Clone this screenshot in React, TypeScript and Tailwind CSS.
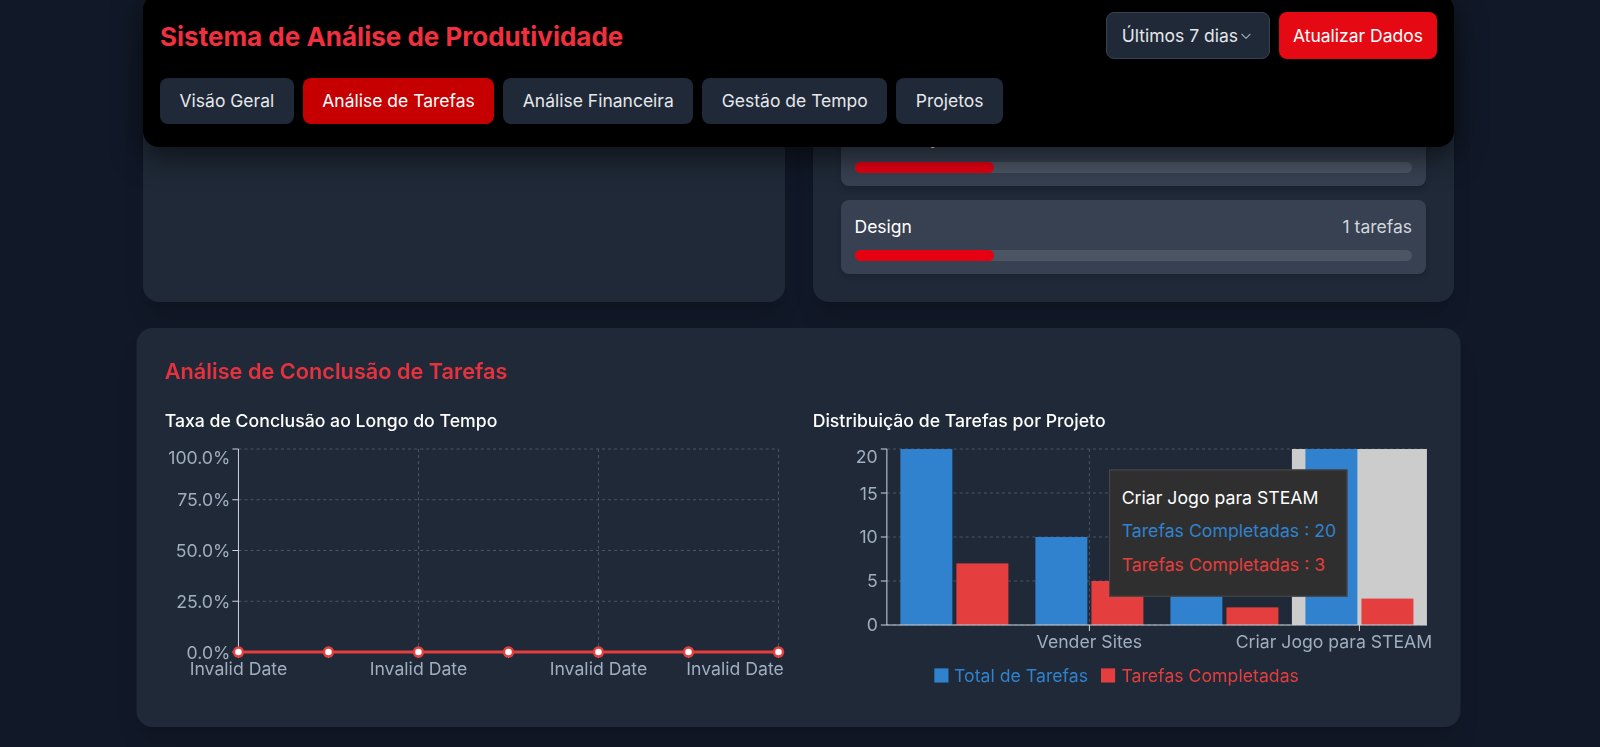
import React from "react";

const BLUE = "#3182ce";
const RED = "#e53e3e";
const GRID = "#4a5568";
const AXIS = "#cbd5e0";
const LABEL = "#a0aec0";
const FS = 17.5;

function CompletionLineChart() {
  const W = 613.5;
  const H = 255;
  const x0 = 73;
  const x1 = 607.7;
  const y0 = 7.8;
  const y1 = 208.8;
  const pts = Array.from({ length: 7 }, (_, i) => x0 + ((x1 - x0) * i) / 6);
  const yt = [0, 25, 50, 75, 100];
  const yOf = (v: number) => y1 - ((y1 - y0) * v) / 100;
  const labelIdx = [0, 2, 4];
  return (
    <svg width={W} height={H} viewBox={`0 0 ${W} ${H}`} className="block" style={{ fontFamily: "Inter, sans-serif" }}>
      {yt.map((v) => (
        <line key={`h${v}`} x1={x0} x2={x1} y1={yOf(v)} y2={yOf(v)} stroke={GRID} strokeDasharray="3 3" />
      ))}
      {[0, 2, 4, 6].map((i) => (
        <line key={`v${i}`} x1={pts[i]} x2={pts[i]} y1={y0} y2={y1} stroke={GRID} strokeDasharray="3 3" />
      ))}
      <line x1={x0} x2={x0} y1={y0} y2={y1} stroke={AXIS} />
      {yt.map((v) => (
        <line key={`t${v}`} x1={x0 - 6} x2={x0} y1={yOf(v)} y2={yOf(v)} stroke={AXIS} />
      ))}
      {yt.map((v) => (
        <text
          key={`l${v}`}
          x={x0 - 8}
          y={v === 100 ? yOf(v) + 8 : yOf(v)}
          textAnchor="end"
          dominantBaseline="central"
          fill={LABEL}
          fontSize={FS}
        >
          {v.toFixed(1)}%
        </text>
      ))}
      <line x1={x0} x2={x1} y1={y1} y2={y1} stroke={AXIS} />
      {pts.map((p, i) => (
        <line key={`xt${i}`} x1={p} x2={p} y1={y1} y2={y1 + 6} stroke={AXIS} />
      ))}
      {labelIdx.map((i) => (
        <text key={`xl${i}`} x={pts[i]} y={225} textAnchor="middle" dominantBaseline="central" fill={LABEL} fontSize={FS}>
          Invalid Date
        </text>
      ))}
      <text x={613} y={225} textAnchor="end" dominantBaseline="central" fill={LABEL} fontSize={FS}>
        Invalid Date
      </text>
      <line x1={x0} x2={x1} y1={y1} y2={y1} stroke={RED} strokeWidth={3} />
      {pts.map((p, i) => (
        <circle key={`d${i}`} cx={p} cy={y1} r={4.5} fill="#ffffff" stroke={RED} strokeWidth={2.5} />
      ))}
    </svg>
  );
}

const projects = [
  { name: "Desenvolver App", total: 20, done: 7 },
  { name: "Vender Sites", total: 10, done: 5 },
  { name: "Marketing Digital", total: 8, done: 2 },
  { name: "Criar Jogo para STEAM", total: 20, done: 3 },
];

function ProjectBarChart() {
  const W = 613.5;
  const H = 212;
  const x0 = 73;
  const x1 = 607.7;
  const y0 = 7.8;
  const y1 = 182;
  const cw = (x1 - x0) / 4;
  const yOf = (v: number) => y1 - ((y1 - y0) * v) / 20;
  const yt = [0, 5, 10, 15, 20];
  const pad = cw * 0.1;
  const bw = (cw - 2 * pad - 4) / 2;
  return (
    <svg width={W} height={H} viewBox={`0 0 ${W} ${H}`} className="block" style={{ fontFamily: "Inter, sans-serif" }}>
      {yt.map((v) => (
        <line key={`h${v}`} x1={x0} x2={x1} y1={yOf(v)} y2={yOf(v)} stroke={GRID} strokeDasharray="3 3" />
      ))}
      {[1, 3].map((i) => (
        <line
          key={`v${i}`}
          x1={x0 + cw * (i + 0.5)}
          x2={x0 + cw * (i + 0.5)}
          y1={y0}
          y2={y1}
          stroke={GRID}
          strokeDasharray="3 3"
        />
      ))}
      <rect x={x0 + cw * 3} y={y0} width={cw} height={y1 - y0} fill="#cccccc" />
      {projects.map((p, i) => {
        const sx = x0 + cw * i + pad;
        return (
          <g key={p.name}>
            <rect x={sx} y={yOf(p.total)} width={bw} height={y1 - yOf(p.total)} fill={BLUE} />
            <rect x={sx + bw + 4} y={yOf(p.done)} width={bw} height={y1 - yOf(p.done)} fill={RED} />
          </g>
        );
      })}
      <line x1={x0} x2={x0} y1={y0} y2={y1} stroke={AXIS} />
      {yt.map((v) => (
        <line key={`t${v}`} x1={x0 - 6} x2={x0} y1={yOf(v)} y2={yOf(v)} stroke={AXIS} />
      ))}
      {yt.map((v) => (
        <text
          key={`l${v}`}
          x={x0 - 9}
          y={v === 20 ? yOf(v) + 7 : yOf(v)}
          textAnchor="end"
          dominantBaseline="central"
          fill={LABEL}
          fontSize={FS}
        >
          {v}
        </text>
      ))}
      <line x1={x0} x2={x1} y1={y1} y2={y1} stroke={AXIS} />
      {[1, 3].map((i) => (
        <line key={`xt${i}`} x1={x0 + cw * (i + 0.5)} x2={x0 + cw * (i + 0.5)} y1={y1} y2={y1 + 6} stroke={AXIS} />
      ))}
      <text x={x0 + cw * 1.5} y={198.5} textAnchor="middle" dominantBaseline="central" fill={LABEL} fontSize={FS}>
        Vender Sites
      </text>
      <text x={613} y={198.5} textAnchor="end" dominantBaseline="central" fill={LABEL} fontSize={FS}>
        Criar Jogo para STEAM
      </text>
    </svg>
  );
}

function Chevron() {
  return (
    <svg width="14" height="14" viewBox="0 0 24 24" fill="none" stroke="#9ca3af" strokeWidth="2" strokeLinecap="round" strokeLinejoin="round" className="ml-[1px]">
      <polyline points="5 9 12 16 19 9" />
    </svg>
  );
}

const tabs = ["Visão Geral", "Análise de Tarefas", "Análise Financeira", "Gestão de Tempo", "Projetos"];

const categories = [
  { name: "Desenvolvimento", count: 2, pct: 50 },
  { name: "Marketing", count: 1, pct: 25 },
  { name: "Manutenção", count: 1, pct: 25 },
  { name: "Design", count: 1, pct: 25 },
];

export default function App() {
  return (
    <div className="min-h-[747px] overflow-hidden bg-[#111827] font-['Inter',sans-serif] text-[17.5px] leading-6 text-white">
      <div className="relative ml-[143px] w-[1311px] pt-8 pb-6">
        {/* Header (sticky, page scrolled) */}
        <header className="absolute left-0 right-0 top-[-6px] z-20 rounded-2xl bg-black px-[17px] pt-[18px] pb-[23px] shadow-[0_10px_30px_rgba(0,0,0,0.55)]">
          <div className="flex h-[47px] items-center justify-between">
            <h1 className="pt-[2px] text-[26px] leading-8 font-bold text-[#f0303f]">Sistema de Análise de Produtividade</h1>
            <div className="flex items-center gap-[9px]">
              <button className="flex h-[47px] items-center rounded-lg border border-[#374151] bg-[#1f2937] pl-[15px] pr-4 text-[17.5px] leading-6 text-gray-200">
                Últimos 7 dias
                <Chevron />
              </button>
              <button className="h-[47px] rounded-lg bg-[#e50914] px-[14px] text-[17.5px] leading-6 text-white">Atualizar Dados</button>
            </div>
          </div>
          <nav className="mt-[19px] flex gap-[9px]">
            {tabs.map((t) => (
              <button
                key={t}
                className={
                  t === "Análise de Tarefas"
                    ? "rounded-lg bg-[#c60000] px-[19.5px] py-[11px] text-[17.5px] leading-6 text-white"
                    : "rounded-lg bg-[#1f2937] px-[19.5px] py-[11px] text-[17.5px] leading-6 text-gray-200"
                }
              >
                {t}
              </button>
            ))}
          </nav>
        </header>

        {/* Top row */}
        <div className="grid grid-cols-2 gap-7">
          <div className="rounded-2xl bg-[#1f2937] p-7 shadow-xl">
            <h3 className="text-[21.5px] leading-7 font-semibold text-[#e5323e]">Status das Tarefas</h3>
          </div>
          <div className="rounded-2xl bg-[#1f2937] p-7 shadow-xl">
            <h3 className="mb-6 text-[21.5px] leading-7 font-semibold text-[#e5323e]">Tarefas por Categoria</h3>
            <div className="flex flex-col gap-3.5">
              {categories.slice(2).map((c) => (
                <div key={c.name} className="rounded-lg bg-[#374151] px-3.5 pt-[15px] pb-[13px] shadow-md">
                  <div className="flex items-center justify-between leading-6">
                    <span className="text-white">{c.name}</span>
                    <span className="text-gray-300">{c.count} tarefas</span>
                  </div>
                  <div className="mt-[11px] h-[11px] rounded-full bg-[#4b5563]">
                    <div className="h-full rounded-full bg-[#e50012]" style={{ width: `${c.pct}%` }} />
                  </div>
                </div>
              ))}
            </div>
          </div>
        </div>

        {/* Completion analysis */}
        <section className="mt-7 scale-[1.01] rounded-2xl bg-[#1f2937] p-7 shadow-xl">
          <h2 className="mb-6 text-[21.5px] font-semibold leading-7 text-[#e5323e]">Análise de Conclusão de Tarefas</h2>
          <div className="grid grid-cols-2 gap-7">
            <div>
              <h4 className="font-medium leading-6 text-white">Taxa de Conclusão ao Longo do Tempo</h4>
              <div className="mt-2">
                <CompletionLineChart />
              </div>
            </div>
            <div>
              <h4 className="font-medium leading-6 text-white">Distribuição de Tarefas por Projeto</h4>
              <div className="relative mt-2">
                <ProjectBarChart />
                <div className="mt-2 flex justify-center gap-[13px] pr-3 leading-6">
                  <span className="flex items-center gap-1.5 text-[#3182ce]">
                    <span className="inline-block h-3.5 w-3.5 bg-[#3182ce]" />
                    Total de Tarefas
                  </span>
                  <span className="flex items-center gap-1.5 text-[#e53e3e]">
                    <span className="inline-block h-3.5 w-3.5 bg-[#e53e3e]" />
                    Tarefas Completadas
                  </span>
                </div>
                <div className="absolute left-[293px] top-[27.6px] w-[236px] border border-[#4a4a4a] bg-[#2f2f2f] px-3 pt-[15px] pb-[18px] leading-6 whitespace-nowrap">
                  <p className="text-white">Criar Jogo para STEAM</p>
                  <p className="mt-[9px] text-[#3182ce]">Tarefas Completadas : 20</p>
                  <p className="mt-[10px] text-[#e53e3e]">Tarefas Completadas : 3</p>
                </div>
              </div>
            </div>
          </div>
        </section>
      </div>
    </div>
  );
}
